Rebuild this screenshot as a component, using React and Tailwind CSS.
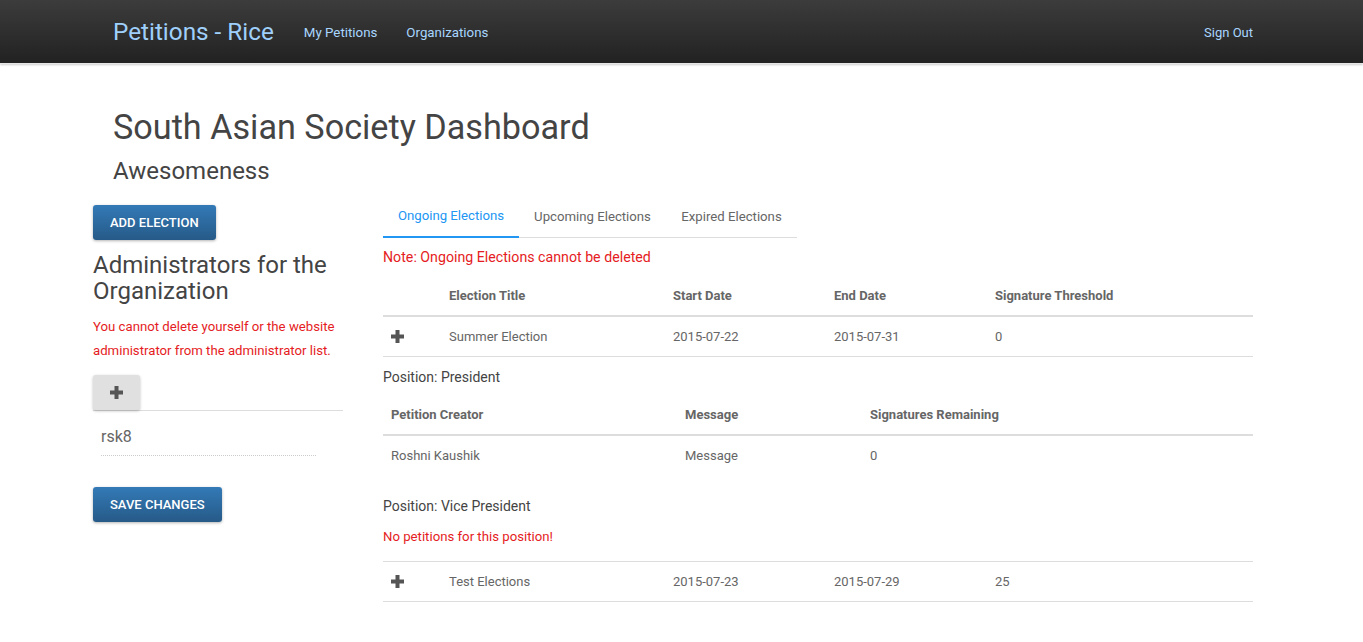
import React from "react";

function Plus({ className = "" }) {
  return (
    <svg width="13" height="13" viewBox="0 0 13 13" className={className}>
      <rect x="4.5" y="0" width="4" height="13" fill="currentColor" />
      <rect x="0" y="4.5" width="13" height="4" fill="currentColor" />
    </svg>
  );
}

function ElectionRow({ title, start, end, threshold }) {
  return (
    <div className="flex h-[40px] items-center text-[13px] text-[#666] border-b border-[#ddd]">
      <div className="w-[58px] pl-[8px] text-[#555]"><Plus /></div>
      <div className="w-[224px] pl-[8px]">{title}</div>
      <div className="w-[161px] pl-[8px]">{start}</div>
      <div className="w-[161px] pl-[8px]">{end}</div>
      <div className="flex-1 pl-[8px]">{threshold}</div>
    </div>
  );
}

export default function App() {
  return (
    <div className="min-h-screen bg-white" style={{ fontFamily: "Roboto, 'Liberation Sans', sans-serif" }}>
      {/* Navbar */}
      <div className="h-[64px] bg-gradient-to-b from-[#3c3c3c] to-[#222] border-b border-[#e5e5e5] shadow-[0_1px_2px_rgba(0,0,0,0.2)]">
        <div className="flex h-full items-center pl-[113px] pr-[110px] pt-[2px]">
          <span className="text-[24.3px] text-[#9fd0fb] leading-none">Petitions - Rice</span>
          <span className="ml-[30px] text-[13.3px] text-[#a9d6ff]">My Petitions</span>
          <span className="ml-[29px] text-[13.3px] text-[#a9d6ff]">Organizations</span>
          <span className="ml-auto text-[13px] text-[#a9d6ff]">Sign Out</span>
        </div>
      </div>

      {/* Header */}
      <div className="pl-[113px]">
        <h1 className="mt-[43px] text-[34.2px] leading-[40px] text-[#444]">South Asian Society Dashboard</h1>
        <h2 className="mt-[9px] text-[24px] leading-[30px] text-[#444]">Awesomeness</h2>
      </div>

      {/* Main */}
      <div className="flex pl-[93px] mt-[14px]">
        {/* Left column */}
        <div className="w-[250px] pt-[5px]">
          <button className="h-[35px] px-[17px] rounded-[3px] bg-gradient-to-b from-[#337ab7] to-[#265a88] text-white text-[13px] font-medium uppercase shadow-[0_1px_3px_rgba(0,0,0,0.3)]">
            Add Election
          </button>
          <h3 className="mt-[12px] text-[24px] leading-[26px] text-[#444]">Administrators for the Organization</h3>
          <p className="mt-[11px] text-[13.2px] leading-[24px] text-[#e51c23]">
            You cannot delete yourself or the website administrator from the administrator list.
          </p>
          <div className="mt-[12px] border-b border-[#ddd]">
            <button className="flex h-[35px] w-[47px] items-center justify-center rounded-[3px] bg-[#e0e0e0] text-[#555] shadow-[0_1px_3px_rgba(0,0,0,0.25)]">
              <Plus />
            </button>
          </div>
          <div className="ml-[8px] w-[215px] pt-[14px] pb-[6px] border-b border-dotted border-[#ccc]">
            <span className="text-[16px] leading-[24px] text-[#666]">rsk8</span>
          </div>
          <button className="mt-[31px] h-[35px] px-[17px] rounded-[3px] bg-gradient-to-b from-[#337ab7] to-[#265a88] text-white text-[13px] font-medium uppercase shadow-[0_1px_3px_rgba(0,0,0,0.3)]">
            Save Changes
          </button>
        </div>

        {/* Right column */}
        <div className="ml-[40px] w-[870px]">
          <div className="flex w-[414px] h-[38px] border-b border-[#ddd] text-[13.2px]">
            <div className="w-[136px] flex items-center justify-center pb-[4px] text-[#2196f3] border-b-2 border-[#2196f3] -mb-px">Ongoing Elections</div>
            <div className="w-[147px] flex items-center justify-center pb-[4px] text-[#666]">Upcoming Elections</div>
            <div className="flex-1 flex items-center justify-center pb-[4px] text-[#666]">Expired Elections</div>
          </div>
          <p className="mt-[7px] text-[14.2px] leading-[24px] text-[#e51c23]">Note: Ongoing Elections cannot be deleted</p>

          {/* Table header */}
          <div className="mt-[8px] flex h-[40px] items-center text-[13px] font-bold text-[#666] border-b-2 border-[#ddd]">
            <div className="w-[58px] pl-[8px]"></div>
            <div className="w-[224px] pl-[8px]">Election Title</div>
            <div className="w-[161px] pl-[8px]">Start Date</div>
            <div className="w-[161px] pl-[8px]">End Date</div>
            <div className="flex-1 pl-[8px]">Signature Threshold</div>
          </div>
          <ElectionRow title="Summer Election" start="2015-07-22" end="2015-07-31" threshold="0" />

          <p className="mt-[8px] text-[14px] leading-[24px] text-[#444]">Position: President</p>
          <div className="mt-[7px] flex h-[40px] items-center text-[13px] font-bold text-[#666] border-b-2 border-[#ddd]">
            <div className="w-[294px] pl-[8px]">Petition Creator</div>
            <div className="w-[185px] pl-[8px]">Message</div>
            <div className="flex-1 pl-[8px]">Signatures Remaining</div>
          </div>
          <div className="flex h-[40px] items-center text-[13px] text-[#666]">
            <div className="w-[294px] pl-[8px]">Roshni Kaushik</div>
            <div className="w-[185px] pl-[8px]">Message</div>
            <div className="flex-1 pl-[8px]">0</div>
          </div>

          <p className="mt-[18px] text-[14px] leading-[24px] text-[#444]">Position: Vice President</p>
          <p className="mt-[7px] text-[13.2px] leading-[24px] text-[#e51c23]">No petitions for this position!</p>

          <div className="mt-[12px] border-t border-[#ddd]">
            <ElectionRow title="Test Elections" start="2015-07-23" end="2015-07-29" threshold="25" />
          </div>
        </div>
      </div>
    </div>
  );
}
